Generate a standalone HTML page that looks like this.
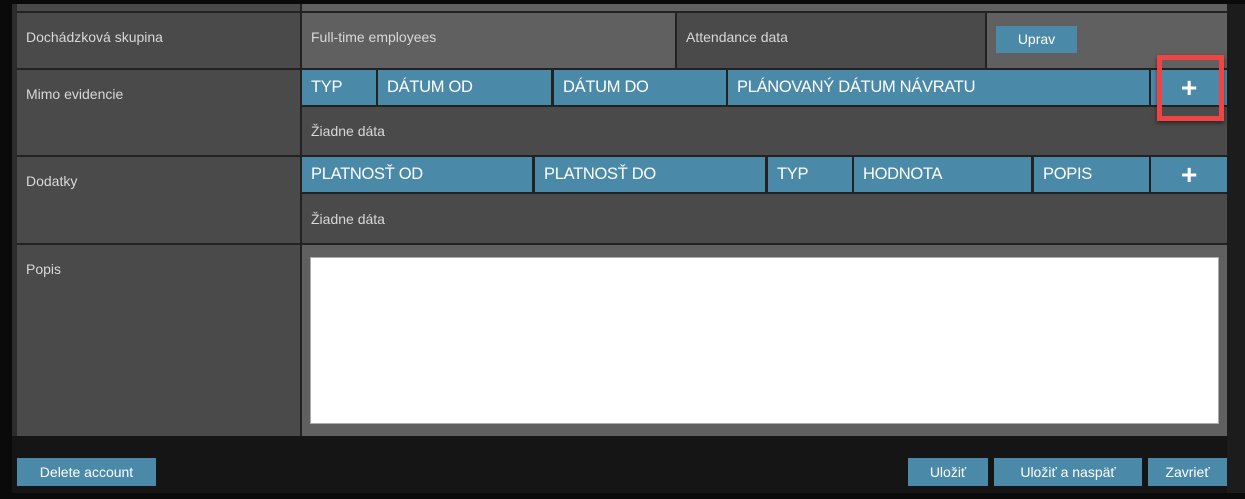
<!DOCTYPE html>
<html><head><meta charset="utf-8"><style>
*{box-sizing:border-box;margin:0;padding:0}
body{width:1245px;height:499px;overflow:hidden;background:#151515;font-family:"Liberation Sans","DejaVu Sans",sans-serif;position:relative;color:#ddd}
.a{position:absolute}
.lbl{font-size:14px;color:#d8d8d8}
.h{background:#4a8aa8;color:#fff;font-size:16.5px;height:35px;line-height:35px;padding-left:9px;letter-spacing:-0.3px}
.btn{background:#4a8aa8;color:#fff;font-size:14px;text-align:center;line-height:28px;height:28px}
.plus{font-size:28px;font-weight:bold;text-align:center;padding:0}
</style></head><body>
<div class="a" style="left:0;top:0;width:1245px;height:4px;background:#0a0a0a"></div>
<div class="a" style="left:0;top:0;width:12px;height:499px;background:#0a0a0a"></div>
<div class="a" style="left:12px;top:4px;width:5px;height:432px;background:#2c2c2c"></div>
<div class="a" style="left:1227px;top:4px;width:18px;height:495px;background:#1c1c1c"></div>
<div class="a" style="left:0;top:493px;width:1245px;height:6px;background:#0a0a0a"></div>
<div class="a" style="left:17px;top:4px;width:1210px;height:432px;background:#222"></div>
<div class="a" style="left:17px;top:4px;width:283px;height:7px;background:#4a4a4a"></div>
<div class="a" style="left:302px;top:4px;width:925px;height:7px;background:#606060"></div>
<div class="a lbl" style="left:17px;top:13px;width:283px;height:55px;background:#4a4a4a;padding:16px 9px">Dochádzková skupina</div>
<div class="a lbl" style="left:302px;top:13px;width:373px;height:55px;background:#606060;padding:16px 9px">Full-time employees</div>
<div class="a lbl" style="left:677px;top:13px;width:308px;height:55px;background:#4a4a4a;padding:16px 9px">Attendance data</div>
<div class="a" style="left:987px;top:13px;width:240px;height:55px;background:#606060"></div>
<div class="a btn" style="left:996px;top:26px;width:81px;height:27px;line-height:27px">Uprav</div>
<div class="a lbl" style="left:17px;top:70px;width:283px;height:85px;background:#4a4a4a;padding:16px 9px">Mimo evidencie</div>
<div class="a h" style="left:302px;top:70px;width:74px">TYP</div>
<div class="a h" style="left:378px;top:70px;width:173px">DÁTUM OD</div>
<div class="a h" style="left:554px;top:70px;width:172px">DÁTUM DO</div>
<div class="a h" style="left:728px;top:70px;width:421px">PLÁNOVANÝ DÁTUM NÁVRATU</div>
<div class="a h plus" style="left:1151px;top:70px;width:76px">+</div>
<div class="a lbl" style="left:302px;top:107px;width:925px;height:48px;background:#4a4a4a;padding:16px 9px">Žiadne dáta</div>
<div class="a lbl" style="left:17px;top:157px;width:283px;height:86px;background:#4a4a4a;padding:16px 9px">Dodatky</div>
<div class="a h" style="left:302px;top:157px;width:230px">PLATNOSŤ OD</div>
<div class="a h" style="left:535px;top:157px;width:230px">PLATNOSŤ DO</div>
<div class="a h" style="left:768px;top:157px;width:84px">TYP</div>
<div class="a h" style="left:854px;top:157px;width:177px">HODNOTA</div>
<div class="a h" style="left:1034px;top:157px;width:115px">POPIS</div>
<div class="a h plus" style="left:1151px;top:157px;width:76px">+</div>
<div class="a lbl" style="left:302px;top:194px;width:925px;height:49px;background:#4a4a4a;padding:17px 9px">Žiadne dáta</div>
<div class="a lbl" style="left:17px;top:245px;width:283px;height:191px;background:#4a4a4a;padding:16px 9px">Popis</div>
<div class="a" style="left:302px;top:245px;width:925px;height:191px;background:#606060"></div>
<div class="a" style="left:310px;top:257px;width:909px;height:167px;background:#fff;border:1px solid #aaa"></div>
<div class="a" style="left:1157px;top:55px;width:67px;height:66px;border:5px solid #f04444;box-shadow:0 2px 4px rgba(0,0,0,.5)"></div>
<div class="a btn" style="left:17px;top:458px;width:139px">Delete account</div>
<div class="a btn" style="left:908px;top:458px;width:80px">Uložiť</div>
<div class="a btn" style="left:994px;top:458px;width:148px">Uložiť a naspäť</div>
<div class="a btn" style="left:1148px;top:458px;width:79px">Zavrieť</div>
</body></html>
